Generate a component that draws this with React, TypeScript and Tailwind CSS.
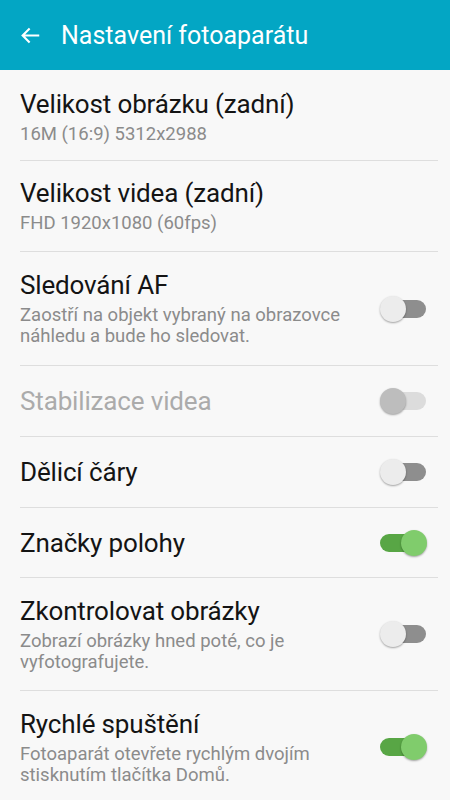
import React from 'react';

type Row = {
  title: string;
  sub?: string[];
  toggle?: 'on' | 'off' | 'disabled';
  disabled?: boolean;
  h: string;
};

const rows: Row[] = [
  { title: 'Velikost obrázku (zadní)', sub: ['16M (16:9) 5312x2988'], h: 'h-[91px] pt-[3px]' },
  { title: 'Velikost videa (zadní)', sub: ['FHD 1920x1080 (60fps)'], h: 'h-[91px]' },
  {
    title: 'Sledování AF',
    sub: ['Zaostří na objekt vybraný na obrazovce', 'náhledu a bude ho sledovat.'],
    toggle: 'off',
    h: 'h-[114px]',
  },
  { title: 'Stabilizace videa', toggle: 'disabled', disabled: true, h: 'h-[71px]' },
  { title: 'Dělicí čáry', toggle: 'off', h: 'h-[71px]' },
  { title: 'Značky polohy', toggle: 'on', h: 'h-[70px]' },
  {
    title: 'Zkontrolovat obrázky',
    sub: ['Zobrazí obrázky hned poté, co je', 'vyfotografujete.'],
    toggle: 'off',
    h: 'h-[113px]',
  },
  {
    title: 'Rychlé spuštění',
    sub: ['Fotoaparát otevřete rychlým dvojím', 'stisknutím tlačítka Domů.'],
    toggle: 'on',
    h: 'h-[112px]',
  },
];

function Toggle({ state }: { state: 'on' | 'off' | 'disabled' }) {
  if (state === 'on') {
    return (
      <div className="relative w-[47px] h-[26px] mr-[11px] flex-shrink-0">
        <div className="absolute left-0 top-[4px] w-[42px] h-[18px] rounded-full bg-[#58a645]" />
        <div className="absolute right-0 top-0 w-[26px] h-[26px] rounded-full bg-[#80cc6c] shadow-[0_1px_2px_rgba(0,0,0,0.35)]" />
      </div>
    );
  }
  const disabled = state === 'disabled';
  return (
    <div className="relative w-[47px] h-[26px] mr-[11px] flex-shrink-0">
      <div
        className={`absolute right-[1px] top-[4px] w-[42px] h-[18px] rounded-full ${
          disabled ? 'bg-[#dcdcdc]' : 'bg-[#8e8e8e]'
        }`}
      />
      <div
        className={`absolute left-0 top-0 w-[26px] h-[26px] rounded-full shadow-[0_1px_2px_rgba(0,0,0,0.35)] ${
          disabled ? 'bg-[#bdbdbd]' : 'bg-[#ececec]'
        }`}
      />
    </div>
  );
}

export default function App() {
  return (
    <div className="w-[450px] h-[800px] overflow-hidden bg-[#f8f8f8] font-['Roboto',sans-serif]">
      {/* App bar */}
      <div className="h-[70px] bg-[#03a6c4] flex items-center pl-[20px] gap-[20px] text-white">
        <svg width="21" height="21" viewBox="0 0 24 24" fill="none" stroke="white" strokeWidth="2.4">
          <path d="M22 12H3M11 4l-8 8 8 8" />
        </svg>
        <span className="text-[25px] leading-none">Nastavení fotoaparátu</span>
      </div>

      <div className="flex flex-col">
        {rows.map((r, i) => (
          <div key={i} className="pl-[20px] pr-[12px]">
            <div
              className={`flex items-center justify-between box-border ${r.h} ${
                i < rows.length - 1 ? 'border-b border-[#dedede]' : ''
              }`}
            >
              <div className="flex flex-col whitespace-nowrap">
                <div
                  className={`text-[26px] leading-[30px] tracking-[-0.15px] ${
                    r.disabled ? 'text-[#ababab]' : 'text-[#141414]'
                  }`}
                >
                  {r.title}
                </div>
                {r.sub && (
                  <div className="text-[18.5px] leading-[21px] text-[#8b8b8b] mt-[5px]">
                    {r.sub.map((s, j) => (
                      <div key={j}>{s}</div>
                    ))}
                  </div>
                )}
              </div>
              {r.toggle && <Toggle state={r.toggle} />}
            </div>
          </div>
        ))}
      </div>
    </div>
  );
}
